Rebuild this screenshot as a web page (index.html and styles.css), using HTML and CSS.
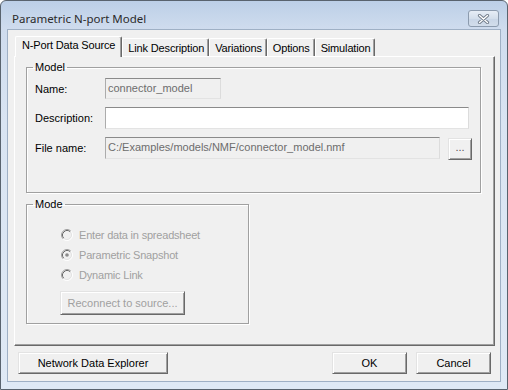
FILE: index.html
```html
<!DOCTYPE html>
<html>
<head>
<meta charset="utf-8">
<title>Parametric N-port Model</title>
<link rel="stylesheet" href="styles.css">
</head>
<body>
<div class="window">
  <div class="titlebar">
    <span class="title">Parametric N-port Model</span>
    <button class="close" aria-label="Close">
      <svg width="13" height="10" viewBox="0 0 13 10">
        <path d="M2.5 1.5 L10.5 8.5 M10.5 1.5 L2.5 8.5" stroke="#737e8c" stroke-width="3.2" stroke-linecap="round" fill="none"/>
        <path d="M2.5 1.5 L10.5 8.5 M10.5 1.5 L2.5 8.5" stroke="#ffffff" stroke-width="1.3" stroke-linecap="round" fill="none"/>
      </svg>
    </button>
  </div>
  <div class="client">
    <div class="tabs">
      <div class="tab active">N-Port Data Source</div>
      <div class="tab">Link Description</div>
      <div class="tab">Variations</div>
      <div class="tab">Options</div>
      <div class="tab">Simulation</div>
    </div>
    <div class="panel">
      <fieldset class="group model">
        <legend>Model</legend>
        <div class="gbody model-body">
          <div class="row">
            <span class="label">Name:</span>
            <div class="field disabled name">connector_model</div>
          </div>
          <div class="row">
            <span class="label">Description:</span>
            <div class="field desc"></div>
          </div>
          <div class="row">
            <span class="label">File name:</span>
            <div class="field disabled file">C:/Examples/models/NMF/connector_model.nmf</div>
            <button class="btn dots">...</button>
          </div>
        </div>
      </fieldset>
      <fieldset class="group mode">
        <legend>Mode</legend>
        <div class="gbody mode-body">
          <div class="radio">
            <svg width="12" height="12" viewBox="0 0 12 12"><circle cx="6" cy="6" r="5" fill="#f0f0f0"/><path d="M2.11 9.89 A5.5 5.5 0 0 1 9.89 2.11" stroke="#a0a0a0" fill="none"/><path d="M9.89 2.11 A5.5 5.5 0 0 1 2.11 9.89" stroke="#ffffff" fill="none"/><path d="M2.82 9.18 A4.5 4.5 0 0 1 9.18 2.82" stroke="#696969" fill="none"/><path d="M9.18 2.82 A4.5 4.5 0 0 1 2.82 9.18" stroke="#e3e3e3" fill="none"/></svg>
            <span>Enter data in spreadsheet</span>
          </div>
          <div class="radio">
            <svg width="12" height="12" viewBox="0 0 12 12"><circle cx="6" cy="6" r="5" fill="#f0f0f0"/><path d="M2.11 9.89 A5.5 5.5 0 0 1 9.89 2.11" stroke="#a0a0a0" fill="none"/><path d="M9.89 2.11 A5.5 5.5 0 0 1 2.11 9.89" stroke="#ffffff" fill="none"/><path d="M2.82 9.18 A4.5 4.5 0 0 1 9.18 2.82" stroke="#696969" fill="none"/><path d="M9.18 2.82 A4.5 4.5 0 0 1 2.82 9.18" stroke="#e3e3e3" fill="none"/><circle cx="6" cy="6" r="1.8" fill="#8a8a8a"/></svg>
            <span>Parametric Snapshot</span>
          </div>
          <div class="radio">
            <svg width="12" height="12" viewBox="0 0 12 12"><circle cx="6" cy="6" r="5" fill="#f0f0f0"/><path d="M2.11 9.89 A5.5 5.5 0 0 1 9.89 2.11" stroke="#a0a0a0" fill="none"/><path d="M9.89 2.11 A5.5 5.5 0 0 1 2.11 9.89" stroke="#ffffff" fill="none"/><path d="M2.82 9.18 A4.5 4.5 0 0 1 9.18 2.82" stroke="#696969" fill="none"/><path d="M9.18 2.82 A4.5 4.5 0 0 1 2.82 9.18" stroke="#e3e3e3" fill="none"/></svg>
            <span>Dynamic Link</span>
          </div>
          <button class="btn reconnect" disabled>Reconnect to source...</button>
        </div>
      </fieldset>
    </div>
    <div class="footer">
      <button class="btn explorer">Network Data Explorer</button>
      <button class="btn ok">OK</button>
      <button class="btn cancel">Cancel</button>
    </div>
  </div>
</div>
</body>
</html>
```

FILE: styles.css
```css
html, body {
  margin: 0;
  padding: 0;
  background: #ffffff;
}

body {
  font-family: "Liberation Sans", Arial, sans-serif;
  font-size: 11px;
  color: #000000;
}

.window {
  box-sizing: border-box;
  width: 508px;
  height: 390px;
  border: 1px solid #59636e;
  border-radius: 6px 6px 0 0;
  padding: 0 6px 7px 6px;
  display: flex;
  flex-direction: column;
  background: linear-gradient(to bottom, #bccfe7 0px, #cfdcee 28px, #d9e4f2 120px, #dfe9f5 100%);
}

.titlebar {
  height: 28px;
  display: flex;
  align-items: flex-start;
  flex: none;
}

.title {
  font-family: "Noto Sans", "Open Sans", sans-serif;
  font-size: 11.5px;
  line-height: 16px;
  color: #2b2b2b;
  margin-top: 10px;
  padding-left: 5px;
}

.close {
  box-sizing: border-box;
  margin: 9px 2px 0 auto;
  width: 31px;
  height: 17px;
  padding: 0;
  border: 1px solid #8c9bae;
  border-radius: 3px;
  background: linear-gradient(to bottom, #e6edf6, #d3deeb 50%, #c8d5e6 51%, #d2ddeb);
  display: flex;
  align-items: center;
  justify-content: center;
}

.close svg {
  display: block;
}

.client {
  flex: 1;
  border: 1px solid #9fb0c5;
  background: #f0f0f0;
  padding: 6px 5px 0 6px;
  display: flex;
  flex-direction: column;
}

.tabs {
  display: flex;
  align-items: flex-end;
  height: 21px;
  margin-left: 1px;
  margin-bottom: -1px;
  position: relative;
  z-index: 1;
  flex: none;
}

.tab {
  box-sizing: border-box;
  height: 18px;
  margin-bottom: 1px;
  padding: 3px 4px 0 5px;
  line-height: 13px;
  letter-spacing: -0.15px;
  border-top: 1px solid #ffffff;
  border-left: 1px solid #ffffff;
  border-right: 1px solid #696969;
  box-shadow: inset -1px 0 0 #a0a0a0;
  border-radius: 2px 2px 0 0;
  white-space: nowrap;
  background: #f0f0f0;
}

.tab.active {
  height: 21px;
  margin-bottom: 0;
  padding: 2px 6px 0 6px;
}

.panel {
  box-sizing: border-box;
  height: 290px;
  flex: none;
  border: 1px solid;
  border-color: #ffffff #696969 #696969 #ffffff;
  box-shadow: inset -1px -1px 0 #a0a0a0;
  display: flex;
  flex-direction: column;
  align-items: flex-start;
}

.group {
  margin: 0;
  padding: 0;
  border: 1px solid #a0a0a0;
  box-shadow: inset 1px 1px 0 #ffffff, 1px 1px 0 #ffffff;
  box-sizing: border-box;
  min-width: 0;
}

.group legend {
  margin-left: 6px;
  padding: 0 2px;
  line-height: 13px;
  font-size: 11px;
}

.model {
  width: 455px;
  margin: 4px 0 0 11px;
}

.model-body {
  padding: 4px 0 33px 8px;
  display: flex;
  flex-direction: column;
  gap: 8px;
}

.row {
  display: flex;
  align-items: center;
  height: 22px;
}

.row:first-child {
  height: 21px;
}

.label {
  width: 70px;
  flex: none;
}

.field {
  box-sizing: border-box;
  height: 21px;
  border: 1px solid;
  border-color: #8a8a8a #dcdcdc #e3e3e3 #acacac;
  background: #ffffff;
  padding: 0 2px;
  line-height: 19px;
  white-space: nowrap;
  overflow: hidden;
}

.field.disabled {
  background: #f0f0f0;
  color: #6d6d6d;
}

.name {
  width: 116px;
}

.desc {
  width: 364px;
  height: 22px;
}

.file {
  width: 335px;
  height: 22px;
}

.btn {
  box-sizing: border-box;
  font-family: "Liberation Sans", Arial, sans-serif;
  font-size: 11px;
  color: #000000;
  background: #f0f0f0;
  border: 1px solid;
  border-color: #e3e3e3 #696969 #696969 #e3e3e3;
  box-shadow: inset 1px 1px 0 #ffffff, inset -1px -1px 0 #a0a0a0;
  padding: 0;
  margin: 0;
  border-radius: 0;
  line-height: 13px;
}

.dots {
  width: 24px;
  height: 22px;
  margin-left: 8px;
  margin-top: 1px;
  color: #555555;
  padding-bottom: 2px;
}

.mode {
  width: 223px;
  margin: 5px 0 0 11px;
}

.mode-body {
  padding: 14px 0 8px 33px;
}

.radio {
  display: flex;
  align-items: center;
  height: 20px;
  color: #a0a0a0;
  margin-left: 1px;
  letter-spacing: -0.2px;
}

.radio svg {
  display: block;
  flex: none;
  margin-right: 6px;
}

.reconnect {
  display: block;
  width: 125px;
  height: 24px;
  margin-top: 6px;
  color: #a0a0a0;
}

.footer {
  display: flex;
  align-items: flex-start;
  margin-top: 6px;
  flex: none;
}

.explorer {
  width: 150px;
  height: 22px;
  margin-left: 4px;
}

.ok {
  width: 75px;
  height: 22px;
  margin-left: auto;
}

.cancel {
  width: 75px;
  height: 22px;
  margin-left: 9px;
  margin-right: 4px;
}
```
